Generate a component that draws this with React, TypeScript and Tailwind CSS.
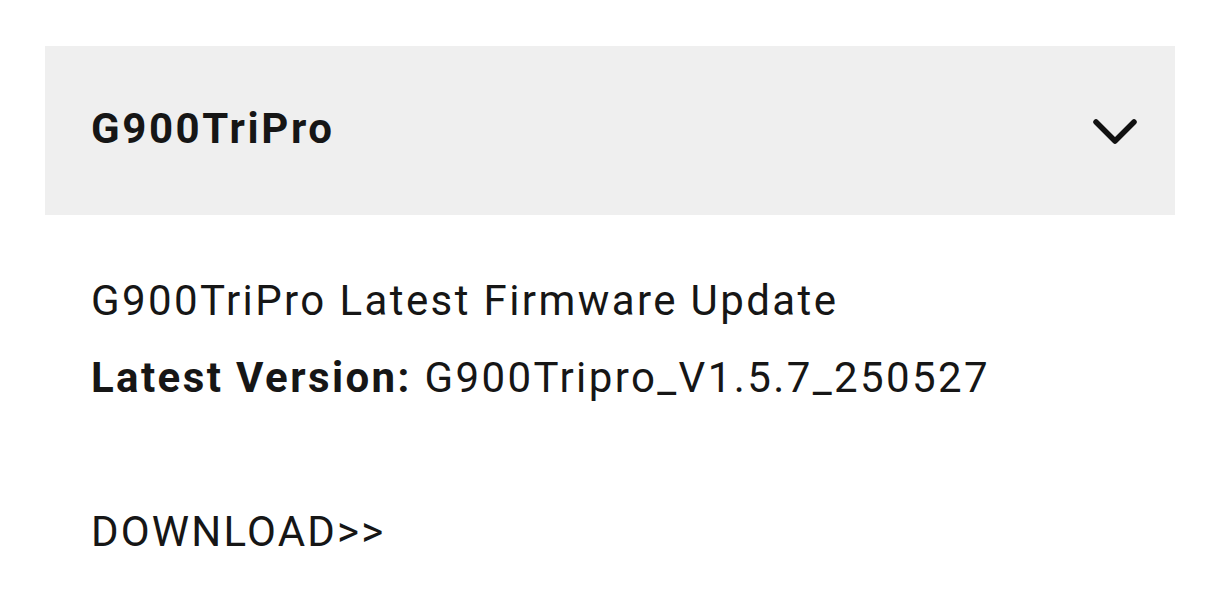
export default function App() {
  return (
    <div className="w-[1220px] h-[614px] bg-white text-[#161616] font-['Roboto',sans-serif] px-[45px] pt-[46px]">
      {/* Accordion header */}
      <div className="h-[169px] bg-[#efefef] flex items-center justify-between pl-[46px] pr-[37px]">
        <h2 className="text-[42px] font-bold leading-none tracking-[2.6px] mt-[-4px]">G900TriPro</h2>
        <svg width="46" height="30" viewBox="0 0 46 30" className="mt-[2px]" fill="none">
          <polyline points="4,5 23,24 42,5" stroke="#111" strokeWidth="5.5" strokeLinecap="round" strokeLinejoin="round" />
        </svg>
      </div>

      {/* Panel body */}
      <div className="pl-[46px] pt-[47px] text-[42px] leading-[77px] tracking-[2.4px]">
        <p>G900TriPro Latest Firmware Update</p>
        <p>
          <span className="font-bold">Latest Version:</span> G900Tripro_V1.5.7_250527
        </p>
        <p>&nbsp;</p>
        <a className="block tracking-[2.2px]">DOWNLOAD&gt;&gt;</a>
      </div>
    </div>
  )
}
